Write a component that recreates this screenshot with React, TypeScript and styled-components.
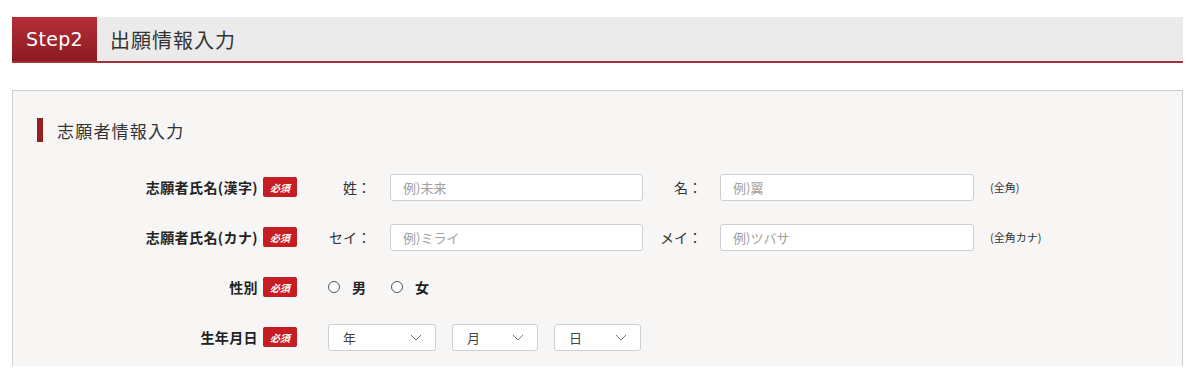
import React from "react";
import styled, { createGlobalStyle } from "styled-components";

const Global = createGlobalStyle`
  html, body { margin: 0; padding: 0; background: #ffffff; }
  body { font-family: "Noto Sans CJK JP", "Liberation Sans", sans-serif; color: #333; }
`;

const Page = styled.div`
  padding: 17px 0 0 12px;
  width: 1171px;
`;

const StepBar = styled.div`
  display: flex;
  align-items: stretch;
  height: 44px;
  background: #ebebeb;
  border-bottom: 2px solid #a3313a;
`;

const StepTag = styled.div`
  width: 85px;
  display: flex;
  align-items: center;
  justify-content: center;
  background: linear-gradient(#b52f38, #8d1a21);
  color: #fff;
  font-family: "DejaVu Sans", "Liberation Sans", sans-serif;
  font-size: 19px;
  letter-spacing: 0.3px;
`;

const StepTitle = styled.div`
  display: flex;
  align-items: center;
  padding-left: 13px;
  font-size: 20px;
  letter-spacing: 1px;
  color: #333;
`;

const Panel = styled.section`
  margin-top: 27px;
  border: 1px solid #cdcdcd;
  border-bottom: none;
  background: #f7f6f5;
  padding: 27px 0 4px 0;
`;

const SectionHead = styled.h2`
  margin: 0 0 20px 24px;
  height: 24px;
  display: flex;
  align-items: center;
  font-weight: normal;
  font-size: 17px;
  letter-spacing: 1.2px;
  color: #333;
  &::before {
    content: "";
    width: 6px;
    height: 24px;
    background: #9a1c24;
    margin-right: 14px;
  }
`;

const Row = styled.div`
  display: flex;
  align-items: center;
  height: 50px;
`;

const Label = styled.div`
  width: 245px;
  text-align: right;
  font-weight: bold;
  font-size: 14px;
  letter-spacing: 0.4px;
  color: #222;
`;

const Badge = styled.span`
  margin-left: 5px;
  width: 34px;
  height: 20px;
  display: inline-flex;
  align-items: center;
  justify-content: center;
  background: #c61d23;
  border-radius: 2px;
  color: #fff;
  font-size: 10px;
  font-weight: bold;
  font-style: italic;
`;

const Content = styled.div`
  margin-left: 31px;
  display: flex;
  align-items: center;
`;

const SubLabel = styled.span<{ $w: number }>`
  width: ${(p) => p.$w}px;
  text-align: right;
  font-size: 14px;
  color: #333;
  flex-shrink: 0;
`;

const TextInput = styled.input<{ $w: number; $ml: number }>`
  box-sizing: border-box;
  width: ${(p) => p.$w}px;
  height: 27px;
  margin-left: ${(p) => p.$ml}px;
  padding: 0 12px;
  border: 1px solid #cfcfcf;
  border-radius: 3px;
  background: #fff;
  font-family: inherit;
  font-size: 13px;
  outline: none;
  &::placeholder { color: #a0a0a0; }
`;

const Note = styled.span`
  margin-left: 16px;
  font-size: 11px;
  color: #333;
`;

const RadioOption = styled.label`
  display: flex;
  align-items: center;
  margin-right: 25px;
  font-size: 14px;
  font-weight: bold;
  color: #222;
`;

const RadioCircle = styled.span`
  box-sizing: border-box;
  width: 12px;
  height: 12px;
  border: 1px solid #555;
  border-radius: 50%;
  background: #fff;
  margin-right: 12px;
`;

const Select = styled.div<{ $w: number }>`
  box-sizing: border-box;
  width: ${(p) => p.$w}px;
  height: 27px;
  margin-right: 16px;
  display: flex;
  align-items: center;
  justify-content: space-between;
  padding: 0 13px 0 14px;
  border: 1px solid #cfcfcf;
  border-radius: 3px;
  background: #fff;
  font-size: 13px;
  color: #444;
`;

const Chevron = () => (
  <svg width="12" height="7" viewBox="0 0 12 7" fill="none">
    <polyline points="1,1 6,6 11,1" stroke="#777" strokeWidth="1" />
  </svg>
);

export default function App() {
  return (
    <>
      <Global />
      <Page>
        <StepBar>
          <StepTag>Step2</StepTag>
          <StepTitle>出願情報入力</StepTitle>
        </StepBar>
        <Panel>
          <SectionHead>志願者情報入力</SectionHead>
          <Row>
            <Label>志願者氏名(漢字)</Label>
            <Badge>必須</Badge>
            <Content>
              <SubLabel $w={43}>姓：</SubLabel>
              <TextInput $w={253} $ml={19} placeholder="例)未来" />
              <SubLabel $w={59}>名：</SubLabel>
              <TextInput $w={254} $ml={18} placeholder="例)翼" />
              <Note>(全角)</Note>
            </Content>
          </Row>
          <Row>
            <Label>志願者氏名(カナ)</Label>
            <Badge>必須</Badge>
            <Content>
              <SubLabel $w={43}>セイ：</SubLabel>
              <TextInput $w={253} $ml={19} placeholder="例)ミライ" />
              <SubLabel $w={59}>メイ：</SubLabel>
              <TextInput $w={254} $ml={18} placeholder="例)ツバサ" />
              <Note>(全角カナ)</Note>
            </Content>
          </Row>
          <Row>
            <Label>性別</Label>
            <Badge>必須</Badge>
            <Content>
              <RadioOption>
                <RadioCircle />男
              </RadioOption>
              <RadioOption>
                <RadioCircle />女
              </RadioOption>
            </Content>
          </Row>
          <Row>
            <Label>生年月日</Label>
            <Badge>必須</Badge>
            <Content>
              <Select $w={108}>
                年<Chevron />
              </Select>
              <Select $w={86}>
                月<Chevron />
              </Select>
              <Select $w={87}>
                日<Chevron />
              </Select>
            </Content>
          </Row>
        </Panel>
      </Page>
    </>
  );
}
